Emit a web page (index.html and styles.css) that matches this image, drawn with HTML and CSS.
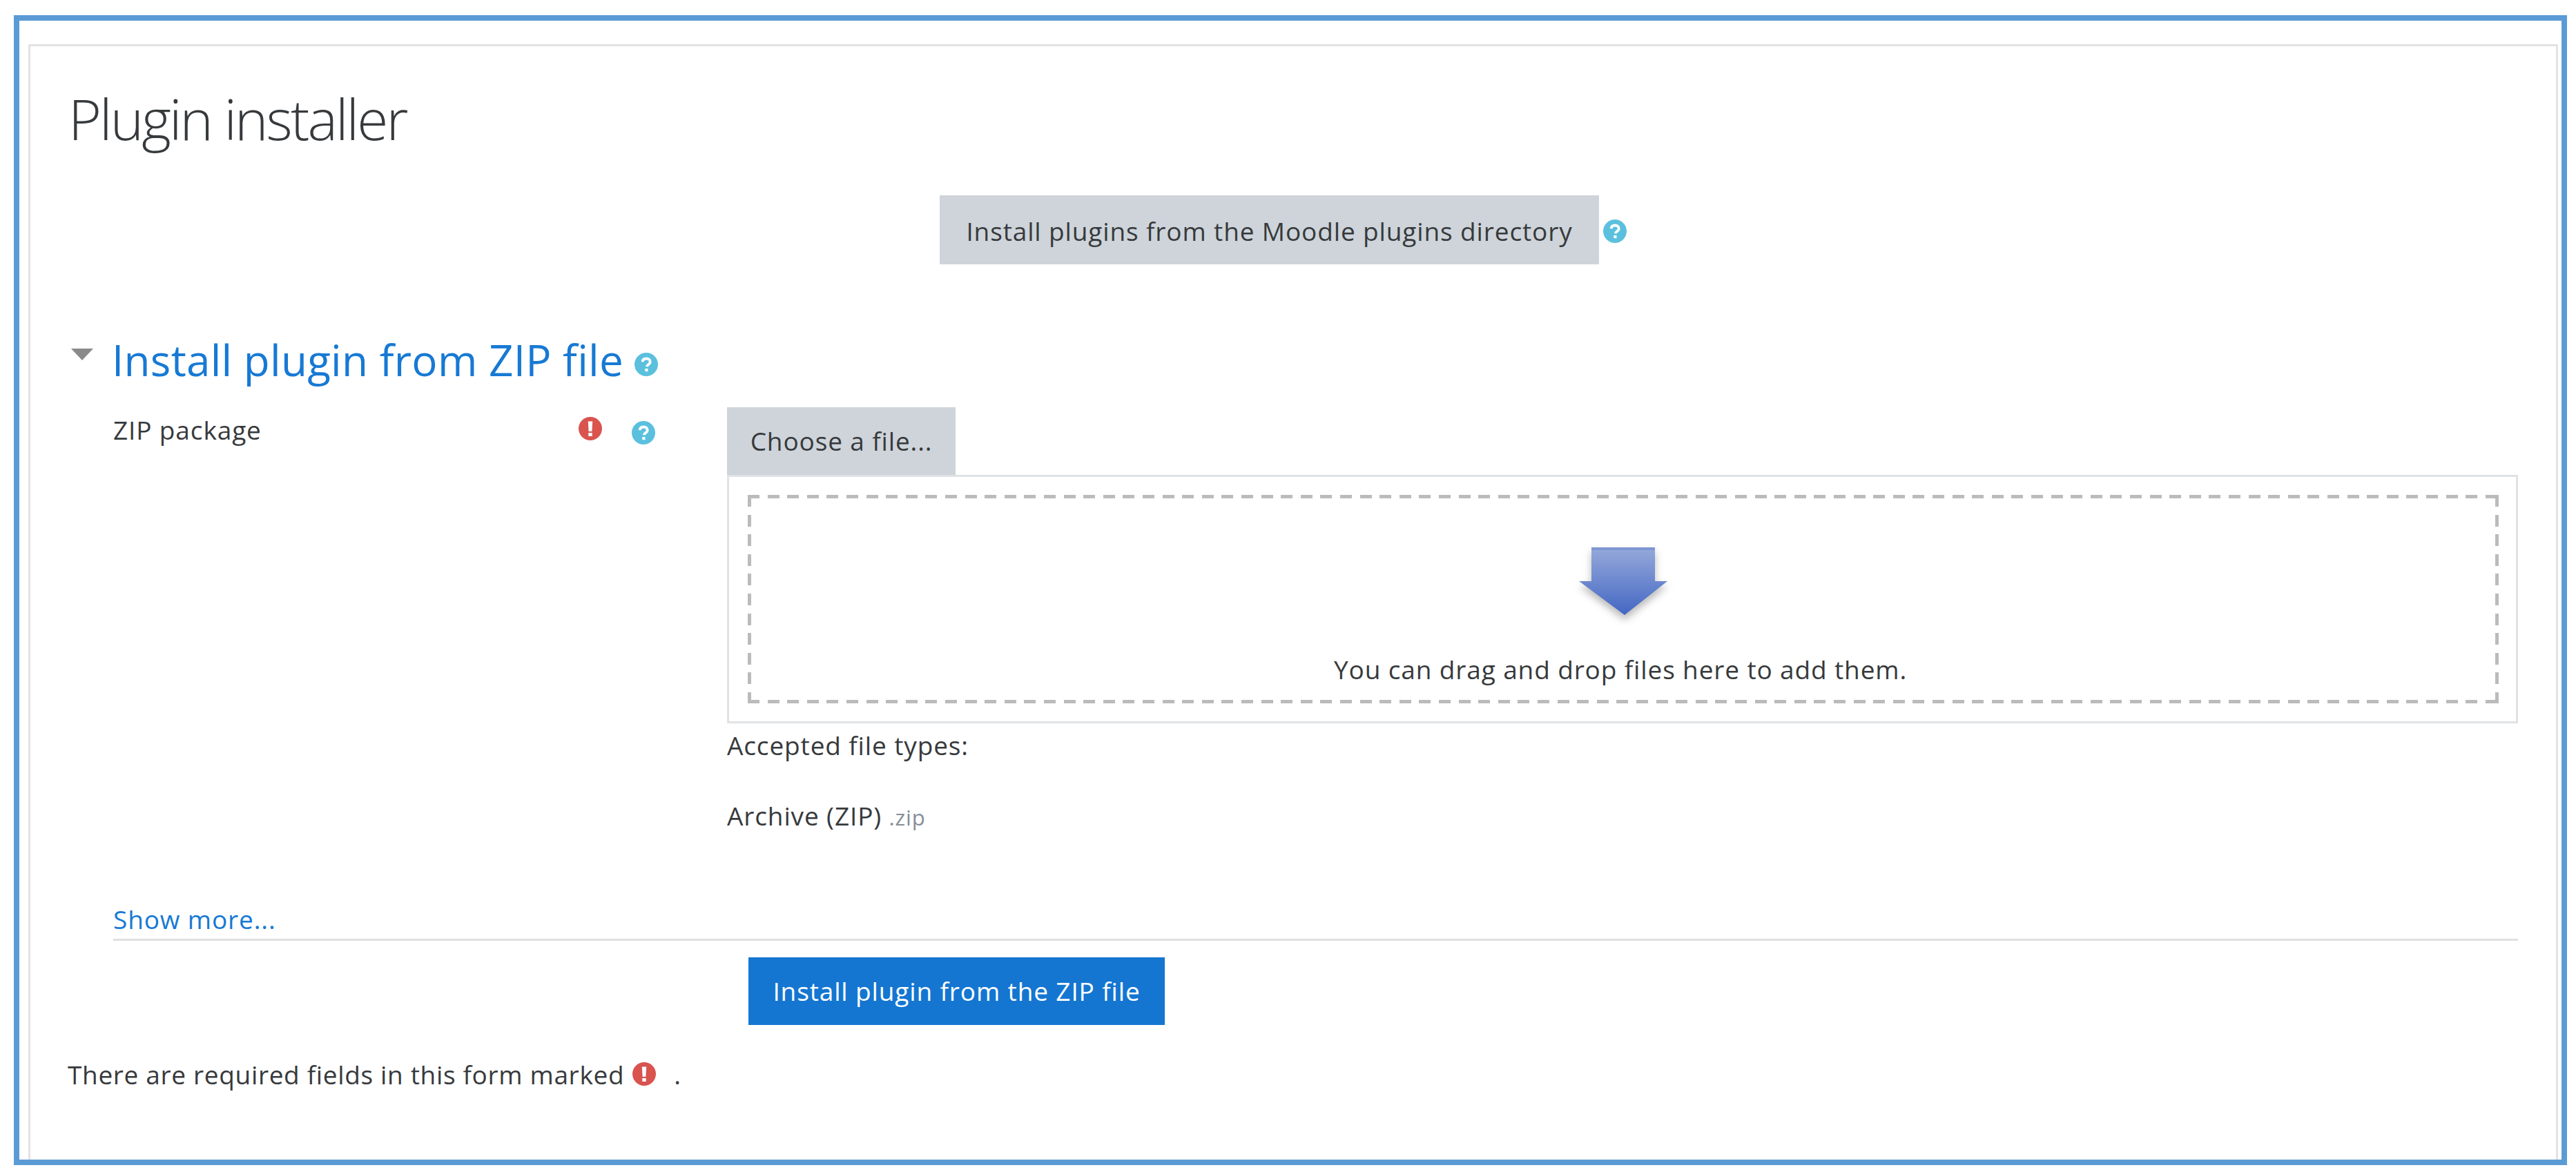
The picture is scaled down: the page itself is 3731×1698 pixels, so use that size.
FILE: index.html
```html
<!DOCTYPE html>
<html lang="en">
<head>
<meta charset="utf-8">
<title>Plugin installer</title>
<link rel="stylesheet" href="styles.css">
</head>
<body>
<svg class="defs" width="0" height="0" aria-hidden="true">
  <defs>
    <symbol id="help" viewBox="0 0 34 34">
      <circle cx="17" cy="17" r="17" fill="#5bc0de"/>
      <path d="M11.5 13.2c.4-3 2.7-4.7 5.7-4.7 3.200 0 5.500 1.900 5.500 4.600 0 2.300-1.300 3.300-2.800 4.300-1.200.8-1.900 1.400-1.900 2.800" fill="none" stroke="#fff" stroke-width="3.800"/>
      <rect x="15.300" y="23" width="4.200" height="4.200" fill="#fff"/>
    </symbol>
    <symbol id="req" viewBox="0 0 34 34">
      <circle cx="17" cy="17" r="17" fill="#d9534f"/>
      <path d="M13.800 6.500h6.400l-.8 14.500h-4.800z" fill="#fff"/>
      <rect x="14.300" y="23" width="5.400" height="5" fill="#fff"/>
    </symbol>
    <linearGradient id="arrowfill" x1="0" y1="0" x2="0" y2="1">
      <stop offset="0" stop-color="#95a9da"/>
      <stop offset="1" stop-color="#4467c3"/>
    </linearGradient>
  </defs>
</svg>
<div class="frame">
  <main class="card">
    <h1 class="title">Plugin installer</h1>
    <div class="directory-row">
      <button class="btn btn-grey btn-directory" type="button">Install plugins from the Moodle plugins directory</button>
      <svg class="icon icon-directory"><use href="#help"/></svg>
    </div>
    <h2 class="section">
      <span class="caret"></span>
      <span class="section-text">Install plugin from ZIP file</span>
      <svg class="icon icon-section"><use href="#help"/></svg>
    </h2>
    <div class="form-row">
      <div class="label-col">
        <span class="label">ZIP package</span>
        <svg class="icon icon-req"><use href="#req"/></svg>
        <svg class="icon icon-help"><use href="#help"/></svg>
      </div>
      <div class="field-col">
        <button class="btn btn-grey btn-choose" type="button">Choose a file...</button>
        <div class="dropbox">
          <div class="dashed">
            <svg class="arrow" viewBox="0 0 128 98">
              <path class="arrow-shape" d="M18 0H110V49H128L66 98 0 49H18Z" fill="url(#arrowfill)"/>
              <path d="M18 0H110V4H18Z" fill="#7f96d2"/>
            </svg>
            <p class="drop-text">You can drag and drop files here to add them.</p>
          </div>
        </div>
        <p class="types-title">Accepted file types:</p>
        <p class="types-item">Archive (ZIP) <small class="ext">.zip</small></p>
      </div>
    </div>
    <a class="show-more" href="#">Show more...</a>
    <div class="submit-row">
      <button class="btn btn-primary" type="button">Install plugin from the ZIP file</button>
    </div>
    <p class="required-note">There are required fields in this form marked <svg class="icon icon-note"><use href="#req"/></svg> <span class="dot">.</span></p>
  </main>
</div>
</body>
</html>
```

FILE: styles.css
```css
* { box-sizing: border-box; }
html, body { margin: 0; padding: 0; background: #fff; }
body {
  font-family: "Open Sans", "Noto Sans", sans-serif;
  font-size: 37px;
  color: #373a3c;
  letter-spacing: 0.87px;
  height: 1698px;
  padding: 22px 13px 10px 20px;
}
.defs { position: absolute; }
p, h1, h2 { margin: 0; font-weight: 400; }
.frame {
  height: 1666px;
  border: 8px solid #5b9bd5;
  padding: 34px 5px 0 13px;
  display: flex;
}
.card {
  flex: 1;
  border: 3px solid #e3e3e3;
  border-bottom: 0;
  padding: 0 55px 0 0;
}
.icon { width: 34px; height: 34px; flex: none; display: block; }
.title {
  font-size: 82px;
  font-weight: 300;
  letter-spacing: -2.9px;
  line-height: 100px;
  margin: 54px 0 0 55px;
}
.directory-row {
  display: flex;
  align-items: center;
  gap: 6px;
  margin: 62px 0 0 1317px;
}
.icon-directory { margin-top: 4px; }
.btn {
  border: 0;
  border-radius: 0;
  font: inherit;
  letter-spacing: inherit;
  display: block;
}
.btn-grey { background: #ced4da; color: #373a3c; }
.btn-directory { width: 955px; height: 100px; padding-top: 3px; }
.section {
  display: flex;
  align-items: center;
  color: #1779d4;
  font-size: 62px;
  line-height: 80px;
  letter-spacing: 0.25px;
  margin: 98px 0 0 59px;
  height: 80px;
}
.caret {
  width: 0; height: 0;
  border-left: 16px solid transparent;
  border-right: 16px solid transparent;
  border-top: 17px solid #8a8a8a;
  margin: -16px 27px 0 0;
}
.icon-section { margin: 14px 0 0 16px; }
.form-row { display: flex; margin: 29px 0 0 120px; }
.label-col {
  width: 889px;
  flex: none;
  display: flex;
  align-items: flex-start;
  padding-top: 12px;
}
.label { width: 674px; line-height: 46px; margin-top: -2px; }
.icon-req { margin-top: 2px; }
.icon-help { margin: 8px 0 0 43px; }
.field-col { flex: 1; min-width: 0; }
.btn-choose { width: 331px; height: 98px; padding-bottom: 3px; }
.dropbox {
  height: 360px;
  border: 3px solid #e0e3e6;
  padding: 26px 25px 26px 27px;
}
.dashed {
  height: 100%;
  padding-top: 76px;
  text-align: center;
  background:
    repeating-linear-gradient(90deg, #bbb 0 17px, transparent 17px 28.6px) top / 100% 5px no-repeat,
    repeating-linear-gradient(90deg, #bbb 0 17px, transparent 17px 28.6px) bottom / 100% 5px no-repeat,
    repeating-linear-gradient(180deg, #bbb 0 17px, transparent 17px 28.6px) left / 5px 100% no-repeat,
    repeating-linear-gradient(180deg, #bbb 0 17px, transparent 17px 28.6px) right / 5px 100% no-repeat;
}
.arrow { width: 128px; height: 98px; display: block; margin: 0 auto; overflow: visible; }
.arrow-shape { filter: drop-shadow(0 7px 6px rgba(0, 0, 0, .28)); }
.drop-text { line-height: 46px; margin-top: 56px; margin-left: -8px; }
.types-title { line-height: 46px; margin-top: 9px; }
.types-item { line-height: 46px; margin-top: 56px; }
.ext { font-size: 31px; color: #868e96; }
.show-more {
  display: block;
  color: #1779d4;
  text-decoration: none;
  line-height: 46px;
  margin: 102px 0 0 120px;
  padding-bottom: 5px;
  border-bottom: 3px solid #e0e0e0;
}
.submit-row { margin: 24px 0 0 1040px; }
.btn-primary { background: #1476d1; color: #fff; width: 603px; height: 98px; padding-bottom: 3px; }
.required-note {
  display: flex;
  align-items: center;
  line-height: 46px;
  letter-spacing: 0.66px;
  margin: 49px 0 0 54px;
}
.icon-note { margin: -2px 0 0 12px; }
.dot { margin-left: 26px; }
```
